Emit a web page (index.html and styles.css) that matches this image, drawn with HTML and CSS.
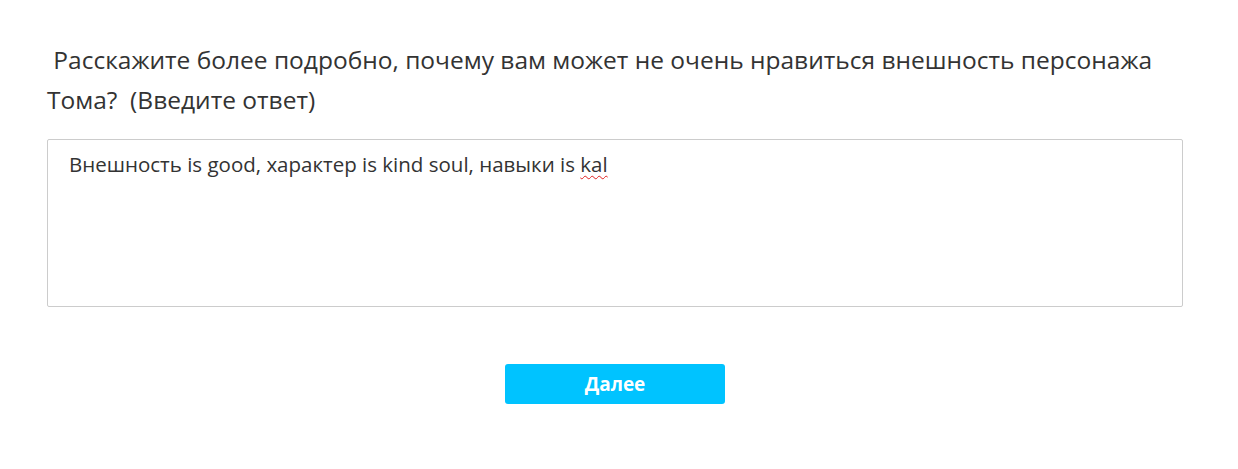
FILE: index.html
```html
<!DOCTYPE html>
<html lang="ru">
<head>
<meta charset="utf-8">
<link rel="stylesheet" href="styles.css">
</head>
<body>
<div class="page">
  <div class="question">&nbsp;Расскажите более подробно, почему вам может не очень нравиться внешность персонажа Тома?&nbsp; (Введите ответ)</div>
  <div class="answer">Внешность is good, характер is kind soul, навыки is <span class="typo">kal</span></div>
  <div class="actions">
    <button class="next">Далее</button>
  </div>
</div>
</body>
</html>
```
FILE: styles.css
```css
html, body {
  margin: 0;
  padding: 0;
  background: #ffffff;
}
.page {
  width: 1136px;
  margin-left: 47px;
  padding-top: 40px;
  font-family: "Open Sans", "Noto Sans", sans-serif;
  color: #333333;
}
.question {
  font-size: 24.5px;
  line-height: 40px;
  width: 1120px;
}
.answer {
  margin-top: 19px;
  box-sizing: border-box;
  height: 168px;
  border: 1px solid #cccccc;
  border-radius: 2px;
  padding: 10px 21px;
  font-size: 20.5px;
  line-height: 28px;
  color: #333333;
}
.typo {
  text-decoration: underline wavy #e02020;
  text-decoration-thickness: 1px;
  text-underline-offset: 3px;
}
.actions {
  display: flex;
  justify-content: center;
  margin-top: 57px;
}
.next {
  width: 220px;
  height: 40px;
  border: none;
  border-radius: 3px;
  background: #00c3ff;
  color: #ffffff;
  font-family: "Open Sans", "Noto Sans", sans-serif;
  font-weight: 700;
  font-size: 19px;
  padding: 0;
}
```
